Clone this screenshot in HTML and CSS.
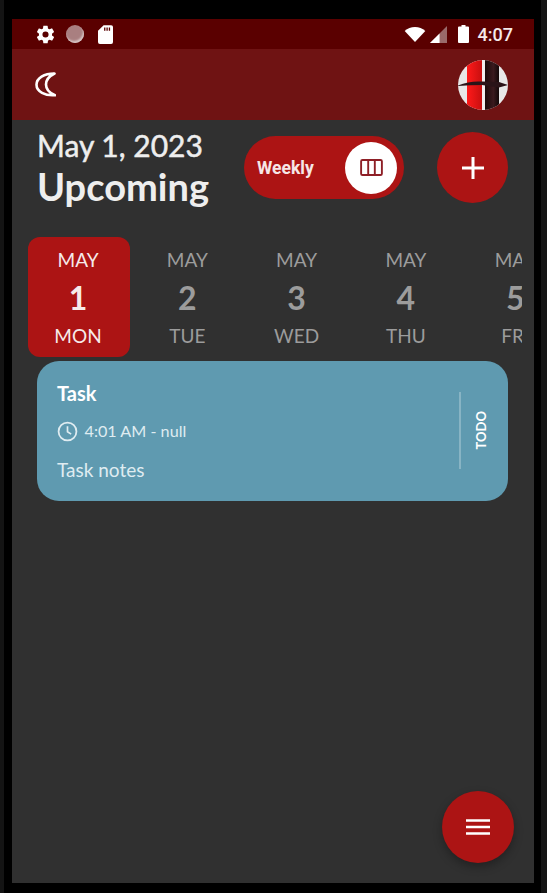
FILE: index.html
```html
<!DOCTYPE html>
<html lang="en">
<head>
    <meta charset="UTF-8">
    <meta name="viewport" content="width=device-width, initial-scale=1.0">
    <title>Upcoming</title>
    <link rel="stylesheet" href="styles.css">
</head>
<body>
    <div class="screen">
        <div class="status-bar">
            <div class="status-group">
                <svg class="status-gear" viewBox="0 0 24 24"><path fill="#fff" d="M19.4 13c.04-.3.1-.65.1-1s-.06-.7-.1-1l2.1-1.65c.2-.15.25-.43.12-.65l-2-3.46c-.12-.22-.39-.3-.61-.22l-2.49 1c-.52-.4-1.08-.73-1.69-.98l-.38-2.65A.49.49 0 0 0 14 2h-4c-.25 0-.46.18-.49.42l-.38 2.65c-.61.25-1.17.59-1.69.98l-2.49-1c-.23-.09-.49 0-.61.22l-2 3.46c-.13.22-.07.5.12.65L4.57 11c-.04.32-.07.66-.07 1s.03.68.07 1l-2.11 1.65c-.19.15-.24.43-.12.65l2 3.46c.12.22.39.3.61.22l2.49-1c.52.4 1.08.73 1.69.98l.38 2.65c.03.24.24.42.49.42h4c.25 0 .46-.18.49-.42l.38-2.65c.61-.25 1.17-.59 1.69-.98l2.49 1c.23.09.49 0 .61-.22l2-3.46c.12-.22.07-.5-.12-.65L19.4 13zM12 15.5a3.5 3.5 0 1 1 0-7 3.5 3.5 0 0 1 0 7z"/></svg>
                <span class="status-dot"></span>
                <svg class="status-sd" viewBox="0 0 16 20"><path fill="#fff" d="M6 0h8a2 2 0 0 1 2 2v16a2 2 0 0 1-2 2H2a2 2 0 0 1-2-2V6z"/><path fill="#5a0000" d="M6.500 2.500h1.400v3.600H6.500zM9 2.500h1.400v3.600H9zM11.500 2.500h1.400v3.600h-1.400z"/></svg>
            </div>
            <div class="status-group status-right">
                <svg class="status-wifi" viewBox="0 0 22 16"><path fill="#fff" d="M11 16 0 4.200C3 1.600 6.800 0 11 0s8 1.600 11 4.200z"/></svg>
                <svg class="status-signal" viewBox="0 0 16 16"><path fill="#9a6a6a" d="M16 0v16H0z"/><path fill="#fff" d="M9 7v9H0z"/></svg>
                <svg class="status-battery" viewBox="0 0 11 18"><path fill="#fff" d="M3.500 0h4v1.500H10a1 1 0 0 1 1 1V17a1 1 0 0 1-1 1H1a1 1 0 0 1-1-1V2.500a1 1 0 0 1 1-1h2.500z"/></svg>
                <span class="status-time">4:07</span>
            </div>
        </div>

        <div class="app-bar">
            <svg class="moon" viewBox="0 0 21 25"><path fill="none" stroke="#fff" stroke-width="2.600" stroke-linejoin="round" d="M19.500 1.500C9 1.500 1.500 6 1.500 12.800S10 24 20 23.200C14.500 21 11 17.500 11 12.500S14.500 4 19.500 1.500z"/></svg>
            <svg class="avatar" viewBox="0 0 50 50">
                <defs>
                    <clipPath id="avatarClip"><circle cx="25" cy="25" r="25"/></clipPath>
                    <linearGradient id="avatarRed" x1="0" x2="1" y1="0" y2="0"><stop offset="0" stop-color="#ff1a1a"/><stop offset="1" stop-color="#c80f0f"/></linearGradient>
                    <linearGradient id="avatarDark" x1="0" x2="1" y1="0" y2="0"><stop offset="0" stop-color="#1a0a0a"/><stop offset="0.6" stop-color="#3a1a1e"/><stop offset="1" stop-color="#120808"/></linearGradient>
                </defs>
                <g clip-path="url(#avatarClip)">
                    <rect width="50" height="50" fill="#e8e8e8"/>
                    <rect x="9" width="15" height="50" fill="url(#avatarRed)"/>
                    <rect x="24" width="3" height="50" fill="#f2eeee"/>
                    <rect x="27" width="14" height="50" fill="url(#avatarDark)"/>
                    <path fill="#2a1418" d="M0 25.500C8 22 16 21 24 21.500L41 22L50 25L41 27.500L24 25C16 25 8 25.500 0 26z"/>
                </g>
            </svg>
        </div>

        <div class="page-head">
            <div class="titles">
                <div class="date-title">May 1, 2023</div>
                <div class="main-title">Upcoming</div>
            </div>
            <div class="head-actions">
                <div class="view-toggle">
                    <span class="toggle-label">Weekly</span>
                    <span class="toggle-knob">
                        <svg class="toggle-icon" viewBox="0 0 24 18"><rect x="1" y="1" width="22" height="16" rx="1.500" fill="none" stroke="#8e1f26" stroke-width="2"/><path stroke="#8e1f26" stroke-width="2" d="M8.500 1v16M15.500 1v16"/></svg>
                    </span>
                </div>
                <div class="add-btn">
                    <svg class="add-icon" viewBox="0 0 24 24"><path stroke="#fff" stroke-width="3" d="M12 1v22M1 12h22"/></svg>
                </div>
            </div>
        </div>

        <div class="calendar">
            <div class="day day-active"><span class="day-month">MAY</span><span class="day-num">1</span><span class="day-name">MON</span></div>
            <div class="day"><span class="day-month">MAY</span><span class="day-num">2</span><span class="day-name">TUE</span></div>
            <div class="day"><span class="day-month">MAY</span><span class="day-num">3</span><span class="day-name">WED</span></div>
            <div class="day"><span class="day-month">MAY</span><span class="day-num">4</span><span class="day-name">THU</span></div>
            <div class="day"><span class="day-month">MAY</span><span class="day-num">5</span><span class="day-name">FRI</span></div>
        </div>

        <div class="task-card">
            <div class="task-body">
                <div class="task-title">Task</div>
                <div class="task-time">
                    <svg class="clock" viewBox="0 0 20 20"><circle cx="10" cy="10" r="8.500" fill="none" stroke="#dfecf1" stroke-width="1.700"/><path fill="none" stroke="#dfecf1" stroke-width="1.600" d="M10 5v5.300l3.500 2.200"/></svg>
                    <span>4:01 AM - null</span>
                </div>
                <div class="task-notes">Task notes</div>
            </div>
            <div class="task-status"><span class="status-label">TODO</span></div>
        </div>

        <div class="fab">
            <svg class="fab-icon" viewBox="0 0 24 18"><path stroke="#fff" stroke-width="2.400" d="M0 2.500h24M0 9h24M0 15.500h24"/></svg>
        </div>
    </div>
</body>
</html>
```

FILE: styles.css
```css
* {
    box-sizing: border-box;
}
html, body {
    height: 100%;
}
body {
    margin: 0;
    padding: 19px 7px 10px 8px;
    background: #000;
    border-left: 4px solid #141414;
    border-right: 6px solid #141414;
    font-family: Lato, Arial, sans-serif;
    overflow: hidden;
}
.screen {
    position: relative;
    height: 864px;
    background: #303030;
    overflow: hidden;
}
.status-bar {
    height: 30px;
    padding: 0 21px 0 23px;
    display: flex;
    justify-content: space-between;
    align-items: center;
    background: #5a0000;
}
.status-group {
    display: flex;
    align-items: center;
}
.status-gear {
    width: 21px;
    height: 21px;
    margin-right: 10px;
}
.status-dot {
    width: 18px;
    height: 18px;
    margin-right: 14px;
    border-radius: 50%;
    background: #a97f80;
    box-shadow: inset -1px -2px 2px #d8c4c4;
}
.status-sd {
    width: 15px;
    height: 19px;
}
.status-wifi {
    width: 22px;
    height: 15px;
    margin-right: 4px;
}
.status-signal {
    width: 17px;
    height: 17px;
    margin-right: 11px;
}
.status-battery {
    width: 11px;
    height: 18px;
    margin-right: 9px;
}
.status-time {
    color: #f4eaea;
    font-family: Roboto, Arial, sans-serif;
    font-size: 18px;
    font-weight: 500;
}
.app-bar {
    height: 71px;
    padding: 0 26px 0 23px;
    display: flex;
    justify-content: space-between;
    align-items: center;
    background: #6f1313;
}
.moon {
    width: 21px;
    height: 25px;
}
.avatar {
    width: 50px;
    height: 50px;
    margin-top: 1px;
}
.page-head {
    height: 117px;
    padding: 7px 26px 0 25px;
    display: flex;
    justify-content: space-between;
}
.date-title {
    color: #eeeeee;
    font-size: 30px;
    font-weight: 400;
    line-height: 36px;
    -webkit-text-stroke: 0.5px #eeeeee;
}
.main-title {
    color: #eeeeee;
    font-size: 38px;
    font-weight: 700;
    line-height: 47px;
}
.head-actions {
    display: flex;
    align-items: flex-start;
    gap: 33px;
    padding-top: 5px;
}
.view-toggle {
    width: 160px;
    height: 63px;
    margin-top: 4px;
    padding: 0 7px 0 13px;
    display: flex;
    justify-content: space-between;
    align-items: center;
    border-radius: 32px;
    background: #ac1414;
}
.toggle-label {
    color: #f6e6e6;
    font-family: Roboto, Arial, sans-serif;
    font-size: 17.500px;
    font-weight: 700;
}
.toggle-knob {
    width: 52px;
    height: 52px;
    display: flex;
    justify-content: center;
    align-items: center;
    border-radius: 50%;
    background: #fff;
}
.toggle-icon {
    width: 23px;
    height: 17px;
}
.add-btn {
    width: 71px;
    height: 71px;
    display: flex;
    justify-content: center;
    align-items: center;
    border-radius: 50%;
    background: #ac1414;
}
.add-icon {
    width: 24px;
    height: 24px;
}
.calendar {
    height: 124px;
    margin-right: 12px;
    padding-left: 16px;
    display: flex;
    gap: 7.300px;
    overflow: hidden;
}
.day {
    flex: none;
    width: 102px;
    height: 120px;
    padding: 11px 2px 0 0;
    display: flex;
    flex-direction: column;
    align-items: center;
    border-radius: 12px;
    color: #9c9c9c;
}
.day-active {
    background: #ac1414;
    color: #f6eaea;
}
.day-month,
.day-name {
    font-size: 19px;
    line-height: 24px;
}
.day-num {
    margin: 7px 0 7px;
    font-size: 32px;
    font-weight: 700;
    line-height: 38px;
}
.task-card {
    width: 471px;
    height: 140px;
    margin-left: 25px;
    padding: 20px 0 0 20px;
    display: flex;
    justify-content: space-between;
    border-radius: 22px;
    background: #5f9ab0;
}
.task-title {
    color: #fff;
    font-size: 20px;
    font-weight: 700;
    line-height: 24px;
}
.task-time {
    margin-top: 14px;
    display: flex;
    align-items: center;
    gap: 6.500px;
    color: #dfecf1;
    font-size: 16.200px;
    line-height: 24px;
}
.clock {
    width: 21px;
    height: 21px;
}
.task-notes {
    margin-top: 15px;
    color: #dfecf1;
    font-size: 19px;
    line-height: 24px;
}
.task-status {
    width: 49px;
    height: 77px;
    margin-top: 11px;
    padding-right: 8px;
    display: flex;
    justify-content: center;
    align-items: center;
    border-left: 2px solid #88b4c4;
}
.status-label {
    color: #fff;
    font-size: 13px;
    font-weight: 700;
    writing-mode: vertical-rl;
    transform: rotate(180deg);
}
.fab {
    position: absolute;
    right: 20px;
    bottom: 20px;
    width: 72px;
    height: 72px;
    display: flex;
    justify-content: center;
    align-items: center;
    border-radius: 50%;
    background: #ac1414;
    box-shadow: 0 4px 10px rgba(0, 0, 0, 0.3);
}
.fab-icon {
    width: 24px;
    height: 18px;
}
```
